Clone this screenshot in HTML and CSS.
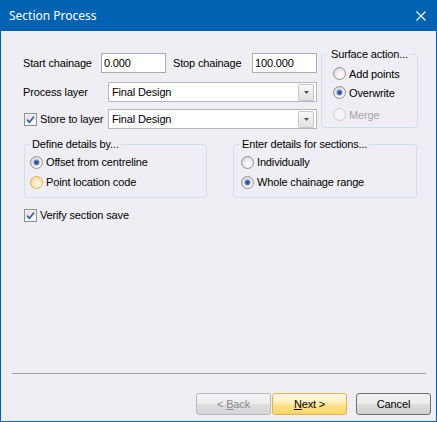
FILE: index.html
```html
<!DOCTYPE html>
<html lang="en">
<head>
    <meta charset="UTF-8">
    <title>Section Process</title>
    <link rel="stylesheet" href="styles.css">
</head>
<body>
    <div class="window">
        <div class="titlebar">
            <span class="title">Section Process</span>
            <svg class="close" width="10" height="10" viewBox="0 0 10 10"><path d="M0.5 0.5L9.5 9.5M9.5 0.5L0.5 9.5" stroke="#fff" stroke-width="1.1"/></svg>
        </div>

        <div class="content">
            <div class="top">
                <div class="fields">
                    <div class="row">
                        <span class="lbl lbl-start">Start chainage</span>
                        <input class="textbox" type="text" value="0.000">
                        <span class="lbl lbl-stop">Stop chainage</span>
                        <input class="textbox" type="text" value="100.000">
                    </div>
                    <div class="row row-process">
                        <span class="lbl lbl-layer">Process layer</span>
                        <div class="combo">
                            <span>Final Design</span>
                            <span class="drop"><svg width="5" height="3" viewBox="0 0 5 3"><path d="M0 0H5L2.5 3Z" fill="#555"/></svg></span>
                        </div>
                    </div>
                    <div class="row row-store">
                        <label class="check lbl-layer">
                            <span class="box"><svg width="9" height="9" viewBox="0 0 9 9"><path d="M1 4.6L3.4 7.2L8 1.4" fill="none" stroke="#3b5b9c" stroke-width="1.6"/></svg></span>
                            Store to layer
                        </label>
                        <div class="combo">
                            <span>Final Design</span>
                            <span class="drop"><svg width="5" height="3" viewBox="0 0 5 3"><path d="M0 0H5L2.5 3Z" fill="#555"/></svg></span>
                        </div>
                    </div>
                </div>

                <fieldset class="group surface">
                    <legend>Surface action...</legend>
                    <div class="option"><span class="radio"></span>Add points</div>
                    <div class="option"><span class="radio checked"></span>Overwrite</div>
                    <div class="option disabled merge"><span class="radio"></span>Merge</div>
                </fieldset>
            </div>

            <div class="groups">
                <fieldset class="group define">
                    <legend>Define details by...</legend>
                    <div class="option"><span class="radio checked"></span>Offset from centreline</div>
                    <div class="option"><span class="radio hover"></span>Point location code</div>
                </fieldset>
                <fieldset class="group enter">
                    <legend>Enter details for sections...</legend>
                    <div class="option"><span class="radio"></span>Individually</div>
                    <div class="option"><span class="radio checked"></span>Whole chainage range</div>
                </fieldset>
            </div>

            <label class="check verify">
                <span class="box"><svg width="9" height="9" viewBox="0 0 9 9"><path d="M1 4.6L3.4 7.2L8 1.4" fill="none" stroke="#3b5b9c" stroke-width="1.6"/></svg></span>
                Verify section save
            </label>
        </div>

        <div class="footer">
            <div class="separator"></div>
            <div class="buttons">
                <button class="btn btn-back" disabled>&lt; <u>B</u>ack</button>
                <button class="btn btn-next"><u>N</u>ext &gt;</button>
                <button class="btn btn-cancel">Cancel</button>
            </div>
        </div>
    </div>
</body>
</html>
```

FILE: styles.css
```css
body {
    margin: 0;
    font-family: "Liberation Sans", Arial, sans-serif;
    font-size: 11px;
    letter-spacing: -0.15px;
    color: #000;
    background: #fff;
}

.window {
    width: 437px;
    height: 422px;
    box-sizing: border-box;
    border: 1px solid #0063b1;
    border-top: none;
    background: #efeef4;
    display: flex;
    flex-direction: column;
}

.titlebar {
    height: 31px;
    flex-shrink: 0;
    background: #0063b1;
    color: #fff;
    display: flex;
    align-items: center;
    justify-content: space-between;
    padding: 0 10px 0 8px;
    font-family: "Noto Sans", sans-serif;
    font-size: 12px;
    letter-spacing: 0;
}

.close {
    display: block;
}

.content {
    padding: 17px 0 0 22px;
}

.top {
    display: flex;
    align-items: flex-start;
}

.fields {
    width: 294px;
    padding-top: 5px;
}

.row {
    display: flex;
    align-items: center;
    height: 20px;
}

.row-process {
    margin-top: 9px;
}

.row-store {
    margin-top: 7px;
}

.lbl {
    line-height: 13px;
}

.lbl-start {
    width: 78px;
}

.lbl-stop {
    width: 79px;
    margin-left: 7px;
}

.lbl-layer {
    width: 85px;
    flex-shrink: 0;
}

.textbox {
    width: 65px;
    height: 20px;
    box-sizing: border-box;
    margin: 0;
    border: 1px solid #abadb3;
    background: #fff;
    padding: 0 2px;
    font: inherit;
    letter-spacing: inherit;
    color: #000;
    outline: none;
}

.combo {
    width: 209px;
    height: 20px;
    box-sizing: border-box;
    border: 1px solid #b7b7b7;
    background: #fff;
    display: flex;
    align-items: center;
    justify-content: space-between;
    padding: 0 2px 0 3px;
}

.drop {
    width: 16px;
    height: 17px;
    box-sizing: border-box;
    border: 1px solid #c6c6c6;
    border-radius: 2px;
    background: linear-gradient(#fafafa, #ececec 50%, #e2e2e2);
    display: flex;
    align-items: center;
    justify-content: center;
}

.drop svg {
    display: block;
}

.group {
    margin: 0;
    min-width: 0;
    box-sizing: border-box;
    border: 1px solid #d5dfe5;
    border-radius: 3px;
}

.group legend {
    padding: 0 2px;
    line-height: 13px;
}

.surface {
    width: 97px;
    margin-left: 4px;
    padding: 3px 0 3px 11px;
}

.surface legend {
    margin-left: -4px;
}

.option {
    display: flex;
    align-items: center;
    height: 19px;
}

.merge {
    margin-top: 3px;
}

.disabled {
    color: #a3a3a3;
}

.radio {
    width: 13px;
    height: 13px;
    box-sizing: border-box;
    flex-shrink: 0;
    margin-right: 3px;
    border: 1px solid #949494;
    border-radius: 50%;
    background: radial-gradient(circle at 62% 66%, #ffffff 0, #f2f2f2 35%, #d2d2d2 85%);
}

.radio.checked {
    background:
        radial-gradient(circle at 50% 50%, #1f3f7c 0, #3a63a8 1.5px, #7d9fd6 2.8px, rgba(255, 255, 255, 0) 3.4px),
        radial-gradient(circle at 62% 66%, #ffffff 0, #f2f2f2 35%, #d2d2d2 85%);
}

.radio.hover {
    border-color: #dcae5c;
    background: radial-gradient(circle at 60% 62%, #fffbe9 0, #fde9b4 45%, #f7cf7d 95%);
}

.disabled .radio {
    border-color: #cccccc;
    background: #f5f5f7;
}

.groups {
    display: flex;
    margin: 9px 0 0 1px;
}

.define {
    width: 183px;
    padding: 1px 0 5px 5px;
}

.enter {
    width: 184px;
    margin-left: 26px;
    padding: 1px 0 5px 7px;
}

.enter legend {
    margin-left: -1px;
}

.define .option,
.enter .option {
    height: 20px;
}

.check {
    display: flex;
    align-items: center;
    line-height: 13px;
}

.box {
    width: 13px;
    height: 13px;
    box-sizing: border-box;
    flex-shrink: 0;
    margin: 0 3px 0 1px;
    border: 1px solid #8e8f8f;
    background: linear-gradient(135deg, #d9dde3, #f6f7f9 80%);
    box-shadow: inset 0 0 0 1px #f4f4f4;
    display: flex;
    align-items: center;
    justify-content: center;
}

.box svg {
    display: block;
}

.verify {
    margin-top: 11px;
}

.footer {
    margin-top: auto;
}

.separator {
    height: 1px;
    background: #a0a0a0;
    margin: 0 10px 0 11px;
}

.buttons {
    display: flex;
    justify-content: flex-end;
    padding: 19px 5px 6px 0;
}

.btn {
    width: 75px;
    height: 22px;
    margin: 0;
    padding: 0;
    border-radius: 3px;
    font: inherit;
    letter-spacing: inherit;
    color: #000;
}

.btn-back {
    border: 1px solid #b5b9bc;
    background: linear-gradient(#f4f4f4, #ececec 48%, #dedede 52%, #d6d6d6);
    color: #8a8a8a;
}

.btn-next {
    margin-left: 1px;
    border: 1px solid #e2b24f;
    background: linear-gradient(#fff9e5, #fdeeb8 45%, #fde08a 55%, #fbd668);
}

.btn-cancel {
    margin-left: 9px;
    border: 1px solid #707070;
    background: linear-gradient(#f2f2f2, #ebebeb 48%, #dddddd 52%, #cfcfcf);
}
```
